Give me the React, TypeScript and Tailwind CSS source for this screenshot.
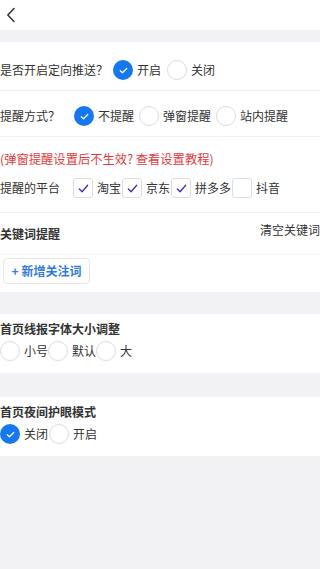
import React from "react";

const Radio = ({ checked }: { checked?: boolean }) =>
  checked ? (
    <span className="flex h-5 w-5 shrink-0 items-center justify-center rounded-full bg-[#1677f2]">
      <svg width="11" height="11" viewBox="0 0 12 12" fill="none">
        <path d="M2.5 6.2l2.4 2.3 4.6-4.7" stroke="#fff" strokeWidth="1.4" strokeLinecap="round" strokeLinejoin="round" />
      </svg>
    </span>
  ) : (
    <span className="h-5 w-5 shrink-0 rounded-full border border-[#dcdcdc] bg-white" />
  );

const Check = ({ checked }: { checked?: boolean }) => (
  <span className="flex h-5 w-5 shrink-0 items-center justify-center rounded-[3px] border border-[#dedede] bg-white">
    {checked && (
      <svg width="13" height="13" viewBox="0 0 14 14" fill="none">
        <path d="M2.5 7.5l3 3 6-7" stroke="#3b2fb8" strokeWidth="1.4" strokeLinecap="round" strokeLinejoin="round" />
      </svg>
    )}
  </span>
);

const Option = ({ checked, label, gap = "mr-0" }: { checked?: boolean; label: string; gap?: string }) => (
  <div className={`flex items-center ${gap}`}>
    <Radio checked={checked} />
    <span className="ml-1">{label}</span>
  </div>
);

const Platform = ({ checked, label }: { checked?: boolean; label: string }) => (
  <div className="flex items-center">
    <Check checked={checked} />
    <span className="ml-1 mr-px">{label}</span>
  </div>
);

export default function App() {
  return (
    <div
      className="min-h-[569px] w-[320px] bg-[#f2f2f4] text-[12px] leading-4 text-[#333]"
      style={{ fontFamily: '"Noto Sans CJK SC", "Noto Sans", sans-serif' }}
    >
      {/* Top bar */}
      <div className="flex h-[30px] items-center bg-white pl-[6px]">
        <svg width="10" height="16" viewBox="0 0 10 16" fill="none">
          <path d="M8 1.5L1.8 8 8 14.5" stroke="#333" strokeWidth="1.5" strokeLinecap="round" strokeLinejoin="round" />
        </svg>
      </div>

      <div className="h-3" />

      {/* Push settings */}
      <div className="bg-white">
        <div className="flex items-center border-b border-[#f0f0f0] pt-[18px] pb-[10px]">
          <span className="mr-[5px]">是否开启定向推送？</span>
          <Option checked label="开启" gap="mr-[6px]" />
          <Option label="关闭" />
        </div>

        <div className="flex items-center border-b border-[#f0f0f0] pt-[15px] pb-[10px]">
          <span className="w-[74px] shrink-0">提醒方式？</span>
          <Option checked label="不提醒" gap="mr-[5px]" />
          <Option label="弹窗提醒" gap="mr-[5px]" />
          <Option label="站内提醒" />
        </div>

        <div className="border-b border-[#f0f0f0] pt-[14px] pb-[14px]">
          <div className="text-[12.3px] text-[#e3393c]">(弹窗提醒设置后不生效? 查看设置教程)</div>
          <div className="mt-[11px] flex items-center">
            <span className="w-[73px] shrink-0">提醒的平台</span>
            <Platform checked label="淘宝" />
            <Platform checked label="京东" />
            <Platform checked label="拼多多" />
            <Platform label="抖音" />
          </div>
        </div>

        <div className="flex h-[42px] justify-between border-b border-[#f6f6f6]">
          <span className="pt-[13px] font-bold">关键词提醒</span>
          <span className="whitespace-nowrap pt-[9px]">清空关键词</span>
        </div>

        <div className="pt-[3px] pb-[8px] pl-[3px]">
          <button className="flex h-[26px] w-[87px] items-center justify-center rounded-[4px] border border-[#e6e6e6] bg-white text-[12px] font-bold text-[#2f7be5]">
            + 新增关注词
          </button>
        </div>
      </div>

      <div className="h-[22px]" />

      {/* Font size */}
      <div className="bg-white pt-[7px] pb-3">
        <div className="font-bold">首页线报字体大小调整</div>
        <div className="mt-1 flex items-center">
          <Option label="小号" />
          <Option label="默认" />
          <Option label="大" />
        </div>
      </div>

      <div className="h-6" />

      {/* Night mode */}
      <div className="bg-white pt-[7px] pb-3">
        <div className="font-bold">首页夜间护眼模式</div>
        <div className="mt-1 flex items-center">
          <Option checked label="关闭" gap="mr-px" />
          <Option label="开启" />
        </div>
      </div>
    </div>
  );
}
